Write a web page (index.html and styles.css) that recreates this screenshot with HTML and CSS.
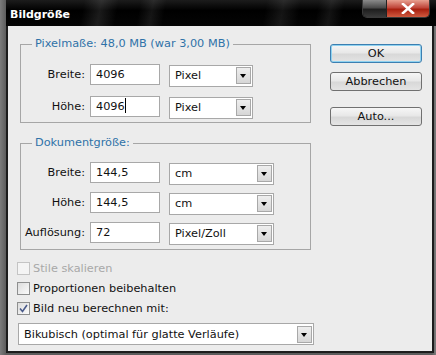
FILE: index.html
```html
<!DOCTYPE html>
<html lang="de">
  <head>
    <meta charset="UTF-8" />
    <title>Bildgröße</title>
    <link rel="stylesheet" href="styles.css">
  </head>
  <body>
    <div class="window">
      <div class="titlebar">
        <span class="title">Bildgröße</span>
        <div class="caption-btns">
          <span class="cap-left"></span>
          <span class="cap-close">
            <svg width="14" height="11" viewBox="0 0 14 11">
              <path d="M2 1 L12 10 M12 1 L2 10" stroke="#fff" stroke-width="2.6" stroke-linecap="square"/>
            </svg>
          </span>
        </div>
      </div>

      <div class="client">
        <div class="left">
          <div class="group group-pixel">
            <span class="legend">Pixelmaße: 48,0 MB (war 3,00 MB)</span>
            <div class="row">
              <label>Breite:</label>
              <div class="field">4096</div>
              <div class="dropdown short"><span>Pixel</span><i class="arrow"></i></div>
            </div>
            <div class="row">
              <label>Höhe:</label>
              <div class="field">4096<span class="caret"></span></div>
              <div class="dropdown short"><span>Pixel</span><i class="arrow"></i></div>
            </div>
          </div>

          <div class="group group-doc">
            <span class="legend">Dokumentgröße:</span>
            <div class="row">
              <label>Breite:</label>
              <div class="field">144,5</div>
              <div class="dropdown"><span>cm</span><i class="arrow"></i></div>
            </div>
            <div class="row">
              <label>Höhe:</label>
              <div class="field">144,5</div>
              <div class="dropdown"><span>cm</span><i class="arrow"></i></div>
            </div>
            <div class="row">
              <label>Auflösung:</label>
              <div class="field">72</div>
              <div class="dropdown"><span>Pixel/Zoll</span><i class="arrow"></i></div>
            </div>
          </div>

          <div class="check disabled"><i class="box"></i>Stile skalieren</div>
          <div class="check"><i class="box"></i>Proportionen beibehalten</div>
          <div class="check"><i class="box checked">
            <svg width="9" height="9" viewBox="0 0 9 9"><path d="M1 4.5 L3.5 7.5 L8 1" fill="none" stroke="#4a5a8a" stroke-width="1.6"/></svg>
          </i>Bild neu berechnen mit:</div>

          <div class="dropdown wide"><span>Bikubisch (optimal für glatte Verläufe)</span><i class="arrow"></i></div>
        </div>

        <div class="buttons">
          <button class="btn default">OK</button>
          <button class="btn">Abbrechen</button>
          <button class="btn auto">Auto...</button>
        </div>
      </div>
    </div>
  </body>
</html>
```

FILE: styles.css
```css
body {
  margin: 0;
  background: #6b6b6b;
  font-family: "DejaVu Sans", sans-serif;
  font-size: 11.3px;
  color: #111;
}

.window {
  width: 436px;
  height: 355px;
  display: flex;
  flex-direction: column;
  background: linear-gradient(to right, #7c7c7c, #5c5c5c 6px, #5c5c5c 432px, #7c7c7c);
}

.titlebar {
  height: 26px;
  margin-left: 6px;
  display: flex;
  align-items: flex-start;
  justify-content: space-between;
  background:
    linear-gradient(100deg, transparent 18%, rgba(255,255,255,0.10) 22%, transparent 26%, transparent 31%, rgba(255,255,255,0.08) 34%, transparent 37%, transparent 60%, rgba(255,255,255,0.08) 64%, transparent 68%, transparent 72%, rgba(255,255,255,0.07) 75%, transparent 78%),
    linear-gradient(#1c1c1c, #000 40%, #050505);
}

.title {
  color: #fff;
  font-weight: bold;
  font-size: 11px;
  padding: 8px 0 0 4px;
}

.caption-btns {
  display: flex;
  margin-right: 6px;
  border: 1px solid #3a3a3a;
  border-top: none;
  border-radius: 0 0 5px 5px;
  overflow: hidden;
  height: 17px;
}

.cap-left {
  width: 23px;
  background: linear-gradient(#8a8a8a, #4a4a4a 45%, #1e1e1e 55%, #3a3a3a);
  border-right: 1px solid #222;
}

.cap-close {
  width: 42px;
  display: flex;
  align-items: center;
  justify-content: center;
  background: linear-gradient(#e8a090, #c0463a 45%, #a8200f 55%, #cf5a40);
}

.client {
  flex: 1;
  margin: 0 2px 2px 6px;
  border: 2px solid #1c1c1c;
  border-top: none;
  background: #ececec;
  display: flex;
  gap: 17px;
  padding: 18px 0 0 9px;
}

.left {
  width: 296px;
}

.group {
  margin-left: 3px;
  width: 291px;
  box-sizing: border-box;
  border: 1px solid #a6a6a6;
}

.legend {
  display: table;
  color: #2f72a8;
  background: #ececec;
  margin: -8px 0 0 11px;
  padding: 0 3px;
  line-height: 14px;
}

.group-pixel {
  height: 79px;
}

.group-doc {
  height: 107px;
  margin-top: 20px;
}

.row {
  display: flex;
  align-items: center;
  height: 21px;
  margin-top: 11px;
}

.legend + .row {
  margin-top: 13px;
}

.group-doc .row {
  margin-top: 9px;
}

.group-doc .legend + .row {
  margin-top: 12px;
}

.row label {
  width: 64px;
  text-align: right;
  padding-right: 5px;
}

.field {
  width: 63px;
  height: 19px;
  line-height: 19px;
  padding-left: 5px;
  background: #fff;
  border: 1px solid #a8a8a8;
  margin-right: 9px;
}

.caret {
  display: inline-block;
  width: 1px;
  height: 15px;
  background: #000;
  vertical-align: -3px;
}

.dropdown {
  display: flex;
  align-items: center;
  justify-content: space-between;
  width: 105px;
  height: 22px;
  padding: 1px;
  background: #fff;
  border: 1px solid #a8a8a8;
  box-sizing: border-box;
  margin-top: 2px;
}

.dropdown.short {
  width: 84px;
}

.dropdown.wide {
  width: 296px;
  margin: 8px 0 0 1px;
}

.dropdown span {
  padding-left: 4px;
}

.arrow {
  width: 15px;
  height: 17px;
  box-sizing: border-box;
  border: 1px solid #a8a8a8;
  background: linear-gradient(#eeeeee, #d6d6d6);
  position: relative;
}

.arrow::after {
  content: "";
  position: absolute;
  left: 3px;
  top: 6px;
  border-left: 3.5px solid transparent;
  border-right: 3.5px solid transparent;
  border-top: 4px solid #000;
}

.check {
  display: flex;
  align-items: center;
  height: 13px;
  margin-top: 7px;
}

.group + .check {
  margin-top: 12px;
}

.check.disabled {
  color: #a8a8a8;
}

.box {
  width: 13px;
  height: 13px;
  box-sizing: border-box;
  border: 1px solid #8e8f8f;
  background: linear-gradient(135deg, #dcdcdc, #fbfbfb);
  margin-right: 3px;
  display: flex;
  align-items: center;
  justify-content: center;
}

.check.disabled .box {
  border-color: #c4c4c4;
  background: #f4f4f4;
}

.buttons {
  display: flex;
  flex-direction: column;
}

.btn {
  width: 92px;
  height: 19px;
  font-family: "DejaVu Sans", sans-serif;
  font-size: 11.3px;
  color: #111;
  padding: 0;
  border: 1px solid #707070;
  border-radius: 3px;
  background: linear-gradient(#f6f6f6, #e8e8e8 45%, #d8d8d8 55%, #e4e4e4);
  margin-bottom: 9px;
}

.btn.default {
  border-color: #3c7fb1;
  box-shadow: inset 0 0 0 1px #8fd2f0;
}

.btn.auto {
  margin-top: 7px;
}
```
